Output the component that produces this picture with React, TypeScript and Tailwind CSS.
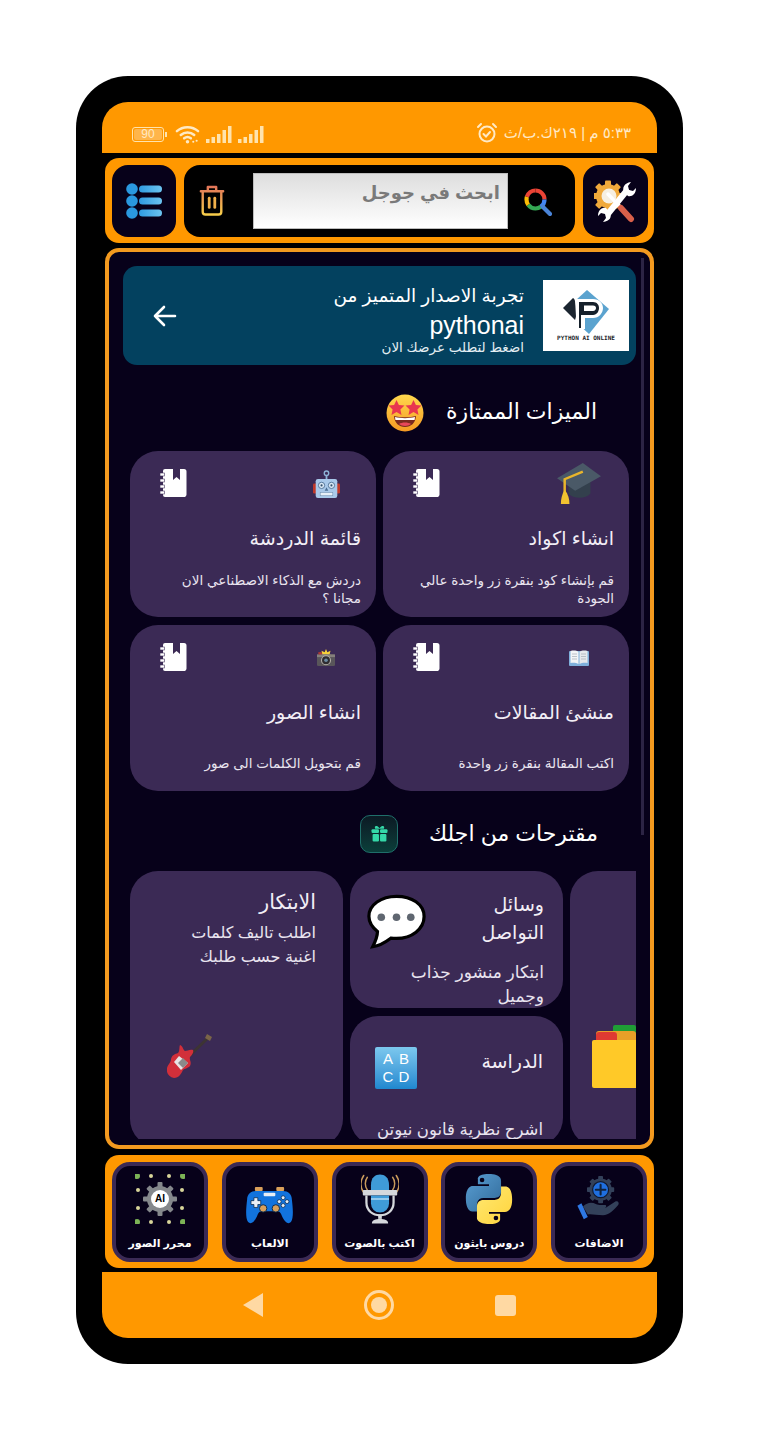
const arabic = "font-['Liberation_Sans','DejaVu_Sans',sans-serif]";

const Battery = () => (
  <div className="flex items-center">
    <div className="w-[32px] h-[15px] border border-[#ffe3ad] rounded-[3px] flex items-center justify-center p-[1px]">
      <div className="w-full h-full bg-[#ffb54a] rounded-[2px] text-[12px] leading-[11px] text-center text-[#ffe9c4] font-['Liberation_Sans',sans-serif]">90</div>
    </div>
    <div className="w-[2px] h-[5px] bg-[#ffe3ad] ml-[1px]" />
  </div>
);

const Wifi = () => (
  <svg width="25" height="20" viewBox="0 0 26 20" fill="none" stroke="#ffe9c4" strokeWidth="2.600" strokeLinecap="round">
    <path d="M2 7c6-5.500 16-5.500 22 0" />
    <path d="M6 11c4-3.500 10-3.500 14 0" />
    <path d="M9.500 14.500c2-1.500 5-1.500 7 0" />
    <circle cx="13" cy="18" r="1.800" fill="#ffe9c4" stroke="none" />
    <circle cx="19" cy="18" r="1.100" fill="#ffe9c4" stroke="none" />
    <circle cx="22.500" cy="17" r="1.100" fill="#ffe9c4" stroke="none" />
  </svg>
);

const Signal = () => (
  <svg width="26" height="17" viewBox="0 0 26 17" fill="#ffe3ad">
    <rect x="0" y="13" width="3.500" height="4" />
    <rect x="5.500" y="11" width="3.500" height="6" />
    <rect x="11" y="8" width="3.500" height="9" />
    <rect x="16.500" y="4" width="3.500" height="13" />
    <rect x="22" y="0" width="3.500" height="17" />
  </svg>
);

const Alarm = () => (
  <svg width="22" height="22" viewBox="0 0 22 22" fill="none" stroke="#ffe9c4" strokeWidth="2" strokeLinecap="round">
    <circle cx="11" cy="12" r="7.500" />
    <path d="M2 5l3-3M20 5l-3-3" />
    <path d="M7.500 12l2.500 2.500 4-4.500" />
  </svg>
);

const ListIcon = () => (
  <svg width="36" height="36" viewBox="0 0 36 36">
    <defs>
      <linearGradient id="bar" x1="0" x2="1" y1="0" y2="0">
        <stop offset="0" stopColor="#2f9be0" />
        <stop offset="1" stopColor="#6cc4f0" />
      </linearGradient>
    </defs>
    {[6, 18, 30].map((y) => (
      <g key={y}>
        <circle cx="6" cy={y} r="5.800" fill="#2a98df" />
        <rect x="13" y={y - 3.500} width="23" height="7" rx="3.500" fill="url(#bar)" />
      </g>
    ))}
  </svg>
);

const Trash = () => (
  <svg width="26" height="33" viewBox="0 0 28 34" fill="none" strokeWidth="2.600" strokeLinecap="round" strokeLinejoin="round">
    <defs>
      <linearGradient id="tr" gradientUnits="userSpaceOnUse" x1="0" x2="0" y1="0" y2="34">
        <stop offset="0" stopColor="#e0705a" />
        <stop offset="1" stopColor="#f8d24a" />
      </linearGradient>
    </defs>
    <path stroke="url(#tr)" d="M2 7h24M9.500 7V2.500h9V7M4 8v21a3 3 0 0 0 3 3h14a3 3 0 0 0 3-3V8" />
    <rect x="9.500" y="13" width="3" height="13" rx="1.500" fill="#f0b04a" />
    <rect x="15.500" y="13" width="3" height="13" rx="1.500" fill="#f0b04a" />
  </svg>
);

const GoogleSearch = () => (
  <svg width="28" height="28" viewBox="0 0 28 28" fill="none" strokeWidth="4.200">
    <g transform="rotate(-90 11.500 11.500)">
      <circle cx="11.500" cy="11.500" r="9" stroke="#ea4335" pathLength="100" strokeDasharray="25 75" strokeDashoffset="0" />
      <circle cx="11.500" cy="11.500" r="9" stroke="#4285f4" pathLength="100" strokeDasharray="15 85" strokeDashoffset="-25" />
      <circle cx="11.500" cy="11.500" r="9" stroke="#34a853" pathLength="100" strokeDasharray="25 75" strokeDashoffset="-40" />
      <circle cx="11.500" cy="11.500" r="9" stroke="#fbbc05" pathLength="100" strokeDasharray="15 85" strokeDashoffset="-65" />
      <circle cx="11.500" cy="11.500" r="9" stroke="#ea4335" pathLength="100" strokeDasharray="20 80" strokeDashoffset="-80" />
    </g>
    <path stroke="#4a84d8" strokeLinecap="round" d="M18.500 18.500l7.500 7.500" />
  </svg>
);

const Tools = () => (
  <svg width="44" height="44" viewBox="0 0 44 44">
    <g fill="#f0a93b">
      <circle cx="14" cy="17" r="12" />
      {[0, 45, 90, 135, 180, 225, 270, 315].map((a) => (
        <rect key={a} x="11" y="1.500" width="6" height="6" rx="1" transform={`rotate(${a} 14 17)`} />
      ))}
    </g>
    <circle cx="15" cy="17" r="7.500" fill="#f6efe2" />
    <path d="M13 36L34 10" stroke="#fff" strokeWidth="6" />
    <path d="M30 13c-2-4 0-9 7-10l-3 4 1 4 4 1 3-3c0 6-4 9-8 8z" fill="#fff" />
    <path d="M16 34c2 4 0 8-7 9l3-4-1-4-4-1-3 3c0-6 4-9 8-8z" fill="#fff" />
    <path d="M14 15l13 14" stroke="#fff" strokeWidth="3.500" strokeLinecap="round" />
    <path d="M27 29l10 11" stroke="#d8604a" strokeWidth="6" strokeLinecap="round" />
  </svg>
);

const Notebook = () => (
  <svg width="28" height="30" viewBox="0 0 28 30" className="shrink-0">
    <path d="M3 3a2 2 0 0 1 2-2h8v11l3.500-3 3.500 3V1h4a2.500 2.500 0 0 1 2.500 2.500v23A2.500 2.500 0 0 1 23.500 29H5a2 2 0 0 1-2-2z" fill="#fff" />
    {[5, 11, 17, 23].map((y) => (
      <rect key={y} x="0" y={y} width="4.500" height="3" fill="#fff" stroke="#3b2a55" strokeWidth=".6" />
    ))}
  </svg>
);

const GradCap = () => (
  <svg width="46" height="42" viewBox="0 0 46 44">
    <path d="M12 20v12c5 6 18 6 23 0V20z" fill="#33404d" />
    <path d="M0 16L27 0l19 14-27 15z" fill="#4a5967" />
    <path d="M27 9L8 17v15" fill="none" stroke="#e8b52c" strokeWidth="2.600" />
    <path d="M8 28c-3 5-4 10-4 15h9c0-5-1-10-5-15z" fill="#f2c230" />
  </svg>
);

const Robot = () => (
  <svg width="27" height="29" viewBox="0 0 30 32">
    <circle cx="15" cy="3.500" r="2.500" fill="none" stroke="#8fb4d8" strokeWidth="1.500" />
    <rect x="14" y="6" width="2" height="5" fill="#8fb4d8" />
    <rect x="0" y="15" width="4" height="11" rx="1.500" fill="#c0392b" />
    <rect x="26" y="15" width="4" height="11" rx="1.500" fill="#c0392b" />
    <rect x="3" y="10" width="24" height="21" rx="2.500" fill="#a9c9ea" />
    <circle cx="9.500" cy="17" r="3.500" fill="#dbe9f6" stroke="#4a6e94" />
    <circle cx="20.500" cy="17" r="3.500" fill="#dbe9f6" stroke="#4a6e94" />
    <circle cx="9.500" cy="17" r="1.200" fill="#36536f" />
    <circle cx="20.500" cy="17" r="1.200" fill="#36536f" />
    <path d="M15 19l-2 4h4z" fill="#4a6e94" />
    <rect x="8" y="25" width="14" height="3.500" fill="#e8f0f8" stroke="#6f8fae" strokeWidth=".6" />
  </svg>
);

const OpenBook = () => (
  <svg width="20" height="16" viewBox="0 0 20 16">
    <rect x="0" y="1" width="20" height="15" rx="1" fill="#7fb0dc" />
    <path d="M1.500 1c3-.8 6-.5 8 .8V14c-2-1.200-5-1.500-8-1z" fill="#f3f5f7" />
    <path d="M18.500 1c-3-.8-6-.5-8 .8V14c2-1.200 5-1.500 8-1z" fill="#e6e9ec" />
    <path d="M3 4h5M3 6.500h5M3 9h5M12 4h5M12 6.500h5M12 9h5" stroke="#a5adb5" strokeWidth=".7" />
  </svg>
);

const Camera = () => (
  <svg width="20" height="18" viewBox="0 0 22 20">
    <path d="M11 0l1.500 3.500L16 2l-1 4 4 1-3 3H6L3 7l4-1-1-4 3.500 1.500z" fill="#f8d23a" />
    <rect x="1" y="6" width="20" height="13" rx="1.500" fill="#59565a" />
    <rect x="1" y="6" width="20" height="3" fill="#85807c" />
    <circle cx="11" cy="12.500" r="5" fill="#2e2c30" stroke="#b5b0a8" strokeWidth="1.200" />
    <circle cx="11" cy="12.500" r="2" fill="#6b8aa0" />
    <rect x="2.500" y="3.500" width="4" height="2.500" fill="#b23a32" />
  </svg>
);

const Gift = () => (
  <div className="w-[38px] h-[38px] rounded-[10px] border border-[#1f6f6a] bg-gradient-to-b from-[#0b1a24] to-[#0a3f3a] flex items-center justify-center">
    <svg width="17" height="17" viewBox="0 0 16 16" fill="#34d8a8">
      <path d="M4 3.500C2.500 1 5.500-.5 8 3c2.500-3.500 5.500-2 4 .5z" />
      <rect x="0.500" y="4" width="7" height="3.500" rx="1" />
      <rect x="8.500" y="4" width="7" height="3.500" rx="1" />
      <rect x="1.500" y="8.500" width="6" height="7" rx="1" />
      <rect x="8.500" y="8.500" width="6" height="7" rx="1" />
    </svg>
  </div>
);

const StarEyes = () => (
  <svg width="38" height="38" viewBox="0 0 38 38" className="mt-[2px]">
    <defs>
      <linearGradient id="face" x1="0" x2="0" y1="0" y2="1">
        <stop offset="0" stopColor="#ffd84d" />
        <stop offset="1" stopColor="#f59a23" />
      </linearGradient>
    </defs>
    <circle cx="19" cy="19" r="18.500" fill="url(#face)" />
    <path d="M10.500 6l2.400 5 5.600.6-4.100 3.800 1.100 5.500-5-2.800-5 2.800 1.100-5.500-4.100-3.800 5.600-.6z" fill="#e8364f" />
    <path d="M27.500 6l2.400 5 5.600.6-4.100 3.800 1.100 5.500-5-2.800-5 2.800 1.100-5.500-4.100-3.800 5.600-.6z" fill="#e8364f" />
    <path d="M8 22c6 1.800 16 1.800 22 0-.5 7-5 11-11 11S8.500 29 8 22z" fill="#7a2a1e" />
    <path d="M9 23c6 1.500 14 1.500 20 0l-.4 3H9.400z" fill="#fff" />
    <path d="M13 30c3-2 9-2 12 0-3 2.500-9 2.500-12 0z" fill="#e8475a" />
  </svg>
);

const Bubble = () => (
  <svg width="59" height="56" viewBox="0 0 62 58">
    <path d="M31 2C15 2 2 11 2 23c0 7 4 12 9 16 0 5-3 12-5 16 7-1 15-6 19-9 2 .2 4 .3 6 .3 16 0 29-10 29-23S47 2 31 2z" fill="#fff" stroke="#000" strokeWidth="3.400" />
    {[15, 31, 46].map((x) => (
      <circle key={x} cx={x} cy="24" r="4" fill="#5f6670" />
    ))}
  </svg>
);

const Guitar = () => (
  <svg width="46" height="46" viewBox="0 0 46 46">
    <path d="M18 27L43 3" stroke="#3d3434" strokeWidth="3" />
    <path d="M40 1l5 3-2 4-5-3z" fill="#7a6448" />
    <path d="M13 12c3 1 3 5 5 6 2 0 5-2 8-1 1 2-1 5-3 7-1 3 2 5 0 9-3 3-5 2-7 4-2 4-4 8-9 8-5-1-8-5-7-10 1-4 4-5 4-9 1-4 4-5 7-6 2-2 1-6 2-8z" fill="#d22f3a" />
    <path d="M12 23l9 7-4 4-3 3-7-8z" fill="#e8e4e4" />
    <path d="M16 25l5 5-5 5-5-5z" fill="#8a8a8a" />
  </svg>
);

const Folder = () => (
  <svg width="44" height="63" viewBox="0 0 44 63" className="shrink-0">
    <rect x="21" y="0" width="23" height="10" rx="2" fill="#1f9d35" />
    <rect x="4" y="6" width="40" height="14" rx="3" fill="#e8a028" />
    <rect x="4" y="7" width="21" height="12" rx="3" fill="#df3a32" />
    <path d="M0 17a2 2 0 0 1 2-2h42v48H2a2 2 0 0 1-2-2z" fill="#ffc928" />
  </svg>
);

const Abcd = () => (
  <div className="w-[42px] h-[42px] rounded-[2px] bg-gradient-to-b from-[#7cc8ee] to-[#1e88cf] grid grid-cols-2 place-items-center px-[5px] py-[3px] text-white text-[15px] leading-[16px] font-['Liberation_Sans',sans-serif]">
    <span>A</span>
    <span>B</span>
    <span>C</span>
    <span>D</span>
  </div>
);

const PythonLogo = () => (
  <svg width="50" height="50" viewBox="0 0 50 54">
    <defs>
      <linearGradient id="pb" x1="0" x2="1" y1="0" y2="1">
        <stop offset="0" stopColor="#5a9fd4" />
        <stop offset="1" stopColor="#306998" />
      </linearGradient>
      <linearGradient id="py" x1="0" x2="1" y1="0" y2="1">
        <stop offset="0" stopColor="#ffe873" />
        <stop offset="1" stopColor="#ffd43b" />
      </linearGradient>
    </defs>
    <path d="M24.500 0C12 0 13 5.500 13 5.500V11h12v2H8S0 12 0 26.500 7 40.500 7 40.500h5v-7s-.3-7.500 7-7.500h12s7 .1 7-6.700V7S39 0 24.500 0zM17.500 4a2.500 2.500 0 1 1 0 5 2.500 2.500 0 0 1 0-5z" fill="url(#pb)" />
    <path d="M25.500 54C38 54 37 48.500 37 48.500V43H25v-2h17s8 1 8-13.500-7-14-7-14h-5v7s.3 7.500-7 7.500H19s-7-.1-7 6.700V47s-1 7 13.500 7zM32.500 50a2.500 2.500 0 1 1 0-5 2.500 2.500 0 0 1 0 5z" fill="url(#py)" />
  </svg>
);

const AddOn = () => (
  <svg width="48" height="47" viewBox="0 0 60 56">
    <g fill="#33415a">
      <circle cx="32" cy="17" r="14" />
      {[0, 45, 90, 135, 180, 225, 270, 315].map((a) => (
        <rect key={a} x="29" y="0" width="6" height="6" rx="1" transform={`rotate(${a} 32 17)`} />
      ))}
    </g>
    <circle cx="32" cy="17" r="10" fill="#1f6fe0" stroke="#111a30" strokeWidth="1.500" />
    <path d="M32 11v12M26 17h12" stroke="#10233f" strokeWidth="2.600" strokeLinecap="round" />
    <path d="M10 38c5-5 11-6 16-3 4 2 10 1 12 1 2 1 1 4-2 4h-6 8l12-8c3-2 6 1 4 4-4 5-12 13-19 13-9 0-14-2-19-1z" fill="#33415a" />
    <path d="M3 37l5-3 8 17-5 3z" fill="#2e78e4" />
  </svg>
);

const Mic = () => (
  <svg width="38" height="52" viewBox="0 0 42 54" fill="none">
    <path d="M7 3c-3 4-3 10 0 14M3 1c-4 6-4 13 0 19M35 3c3 4 3 10 0 14M39 1c4 6 4 13 0 19" stroke="#c89a5c" strokeWidth="1.600" strokeLinecap="round" />
    <path d="M11 12C11 3 16 0 21 0s10 3 10 12v5H11z" fill="#3f9bd8" />
    <rect x="2" y="17" width="38" height="6" rx="1" fill="#d5d8dc" />
    <path d="M11 23h20v9a10 10 0 0 1-20 0z" fill="#3f9bd8" />
    <path d="M11 27h20" stroke="#bfe0f5" strokeWidth="1.500" />
    <path d="M6 23v8c0 9 7 14 15 14s15-5 15-14v-8" stroke="#d5d8dc" strokeWidth="2.500" />
    <rect x="19" y="44" width="4" height="5" fill="#d5d8dc" />
    <path d="M12 54c0-4 4-5 9-5s9 1 9 5z" fill="#d5d8dc" />
  </svg>
);

const Gamepad = () => (
  <svg width="47" height="37" viewBox="0 0 48 38" className="mt-[14px]">
    <rect x="9" y="0" width="8" height="4" rx="1" fill="#d9a05a" />
    <rect x="31" y="0" width="8" height="4" rx="1" fill="#d9a05a" />
    <path d="M10 4h28c5 0 9 3 9 9 1 8 2 19-1 23-3 3-7 0-10-8-1-2-2-3-4-3H16c-2 0-3 1-4 3-3 8-7 11-10 8-3-4-2-15-1-23 0-6 4-9 9-9z" fill="#1273dd" />
    <rect x="18" y="6" width="12" height="3.500" rx="1" fill="#e8eef5" />
    <path d="M8 11h4v3h3v4h-3v3H8v-3H5v-4h3z" fill="#e8eef5" stroke="#0c2b4c" strokeWidth=".8" />
    <g fill="#e8eef5" stroke="#0c2b4c" strokeWidth=".8">
      <circle cx="38" cy="11" r="2" />
      <circle cx="38" cy="19" r="2" />
      <circle cx="34" cy="15" r="2" />
      <circle cx="42" cy="15" r="2" />
    </g>
    <circle cx="17.500" cy="22" r="3.800" fill="#d9a05a" stroke="#0c2b4c" />
    <circle cx="30.500" cy="22" r="3.800" fill="#d9a05a" stroke="#0c2b4c" />
  </svg>
);

const AiGear = () => (
  <div className="relative w-[50px] h-[50px]">
    <svg width="50" height="50" viewBox="0 0 50 50">
      {[
        [2, 2, 3, "#7cb356"],
        [16, 2, 2, "#d8d59a"],
        [34, 2, 2, "#d8d59a"],
        [48, 2, 3, "#7cb356"],
        [2, 48, 3, "#7cb356"],
        [16, 48, 2, "#d8d59a"],
        [34, 48, 2, "#d8d59a"],
        [48, 48, 3, "#7cb356"],
        [3, 16, 2, "#d8d59a"],
        [47, 16, 2, "#d8d59a"],
        [3, 34, 2, "#d8d59a"],
        [47, 34, 2, "#d8d59a"],
      ].map(([x, y, r, c], i) => (
        <circle key={i} cx={x as number} cy={y as number} r={r as number} fill={c as string} />
      ))}
      <g fill="#85888c">
        <circle cx="25" cy="25" r="13" />
        {[0, 45, 90, 135, 180, 225, 270, 315].map((a) => (
          <rect key={a} x="22.500" y="8" width="5" height="6" rx="1" transform={`rotate(${a} 25 25)`} />
        ))}
      </g>
      <circle cx="25" cy="25" r="9" fill="#fff" />
    </svg>
    <div className="absolute inset-0 flex items-center justify-center text-[10px] font-bold text-black font-['Liberation_Sans',sans-serif]">AI</div>
  </div>
);

const PythonAiLogo = () => (
  <div className="w-[86px] h-[71px] bg-white shrink-0 flex flex-col items-center justify-center">
    <svg width="46" height="44" viewBox="0 0 46 44">
      <path d="M24 0l22 19-20 25-13-12V10z" fill="#5ba3cf" />
      <path d="M0 18L10 8c4 2 4 18 2 22z" fill="#1b2530" />
      <path d="M12 9h18c6 0 10 4 10 9s-4 10-10 10h-8v11H13V27z" fill="#fff" />
      <path d="M16 12h14c4 0 6 3 6 6s-2 7-6 7H18v13h-2z" fill="#15202b" />
      <path d="M21 15.500h9c2 0 3 1 3 2.500s-1 3-3 3h-9z" fill="#fff" />
    </svg>
    <div className="text-[6px] leading-[7px] font-bold text-[#1a2228] font-['DejaVu_Sans_Mono',monospace]">PYTHON AI ONLINE</div>
  </div>
);

const features = [
  { title: "انشاء اكواد", desc: "قم بإنشاء كود  بنقرة زر واحدة عالي الجودة", icon: <GradCap /> },
  { title: "قائمة الدردشة", desc: "دردش مع الذكاء الاصطناعي الان مجانا ؟", icon: <Robot /> },
  { title: "منشئ المقالات", desc: "اكتب المقالة بنقرة زر واحدة", icon: <OpenBook /> },
  { title: "انشاء الصور", desc: "قم بتحويل الكلمات الى صور", icon: <Camera /> },
];

const FeatureCard = ({ title, desc, icon }: { title: string; desc: string; icon: React.ReactNode }) => (
  <div className="h-[166px] rounded-[28px] bg-[#3b2a55] pt-[17px] pl-[30px] pr-[15px] flex flex-col">
    <div className="flex justify-between items-start h-[49px] pr-[12px]">
      <Notebook />
      <div className="w-[46px] h-[32px] flex items-center justify-center">{icon}</div>
    </div>
    <div dir="rtl" className={`${arabic} text-[19px] leading-[26px] text-[#f2eef6] mt-[9px]`}>{title}</div>
    <div dir="rtl" className={`${arabic} h-[38px] flex flex-col justify-center text-[13.500px] leading-[18px] text-[#e9e4ef] mt-[19px] -ml-[4px]`}>
      <span>{desc}</span>
    </div>
  </div>
);

const tabs = [
  { label: "محرر الصور", icon: <AiGear /> },
  { label: "الالعاب", icon: <Gamepad /> },
  { label: "اكتب بالصوت", icon: <Mic /> },
  { label: "دروس بايثون", icon: <PythonLogo /> },
  { label: "الاضافات", icon: <AddOn /> },
];

export default function App() {
  return (
    <div className="w-[759px] h-[1440px] bg-white pt-[76px] flex justify-center">
      <div className="w-[607px] h-[1288px] bg-black rounded-[52px] p-[26px]">
        <div className="h-full flex flex-col gap-[5px]">
          {/* status bar */}
          <div className="h-[51px] bg-[#ff9800] rounded-t-[26px] flex items-end justify-between pl-[30px] pr-[26px] pb-[9px] shrink-0">
            <div className="flex items-center gap-[6px]">
              <Battery />
              <div className="ml-[2px]">
                <Wifi />
              </div>
              <Signal />
              <Signal />
            </div>
            <div className="flex items-center gap-[6px]">
              <Alarm />
              <div dir="rtl" className={`${arabic} text-[15px] leading-[20px] text-[#ffe9c4]`}>٥:٣٣ م | ٢١٩ك.ب/ث</div>
            </div>
          </div>

          {/* top bar */}
          <div className="h-[85px] mx-[3px] bg-[#ff9800] rounded-[14px] flex items-center gap-[8px] pl-[7px] pr-[6px] shrink-0">
            <div className="w-[64px] h-[72px] rounded-[16px] bg-[#07011a] flex items-center justify-center shrink-0">
              <ListIcon />
            </div>
            <div className="flex-1 h-[72px] rounded-[16px] bg-black flex items-center pl-[15px]">
              <Trash />
              <div dir="rtl" className={`${arabic} ml-[28px] w-[255px] h-[56px] border border-[#bdbdbd] bg-gradient-to-b from-[#dedede] to-white pr-[7px] pt-[6px] text-[18px] leading-[26px] font-bold text-[#7a7a7a]`}>ابحث في جوجل</div>
              <div className="ml-[16px] mt-[2px]">
                <GoogleSearch />
              </div>
            </div>
            <div className="w-[65px] h-[72px] rounded-[16px] bg-[#07011a] flex items-center justify-center shrink-0">
              <Tools />
            </div>
          </div>

          {/* main panel */}
          <div className="relative h-[901px] mx-[3px] border-4 border-[#f39a1f] rounded-[14px] bg-[#07011a] pt-[14px] pb-[6px] pl-[14px] pr-[14px] flex flex-col shrink-0 overflow-hidden">
            <div className="absolute right-[6px] top-[6px] w-[3px] h-[577px] bg-[#2c2444]" />

            <div className="h-[99px] rounded-[14px] bg-[#03415f] flex items-center justify-between pl-[30px] pr-[7px] shrink-0">
              <svg width="24" height="24" viewBox="0 0 24 24" fill="none" stroke="#fff" strokeWidth="2.600" strokeLinecap="round" strokeLinejoin="round">
                <path d="M2 12h20M11 3l-9 9 9 9" />
              </svg>
              <div className="flex items-center gap-[19px]">
                <div dir="rtl" className={`${arabic} text-right text-white pt-[7px]`}>
                  <div className="text-[18.500px] leading-[26px]">تجربة الاصدار المتميز من</div>
                  <div className="text-[25px] leading-[32px] text-right" dir="ltr">pythonai</div>
                  <div className="text-[13.500px] leading-[14px] text-[#e4eef3]">اضغط لتطلب عرضك الان</div>
                </div>
                <PythonAiLogo />
              </div>
            </div>

            <div className="h-[86px] flex items-center justify-end gap-[22px] pr-[39px] pt-[7px] shrink-0">
              <StarEyes />
              <div dir="rtl" className={`${arabic} text-[22px] leading-[30px] text-white`}>الميزات الممتازة</div>
            </div>

            <div className="grid grid-cols-2 gap-x-[7px] gap-y-[8px] px-[7px] shrink-0" dir="rtl">
              {features.map((f) => (
                <div dir="ltr" key={f.title}>
                  <FeatureCard title={f.title} desc={f.desc} icon={f.icon} />
                </div>
              ))}
            </div>

            <div className="h-[80px] flex items-center justify-end gap-[31px] pr-[38px] pt-[5px] shrink-0">
              <Gift />
              <div dir="rtl" className={`${arabic} text-[22px] leading-[30px] text-white`}>مقترحات من اجلك</div>
            </div>

            <div className="flex-1 min-h-0 overflow-hidden flex gap-[7px] pl-[7px]">
              <div className="w-[213px] h-[276px] shrink-0 rounded-[28px] bg-[#3b2a55] pt-[16px] pr-[27px] flex flex-col">
                <div dir="rtl" className={`${arabic} text-[20.500px] leading-[30px] text-[#f2eef6]`}>الابتكار</div>
                <div dir="rtl" className={`${arabic} text-[16px] leading-[24px] text-[#e9e4ef] mt-[4px] pl-[50px]`}>اطلب تاليف كلمات اغنية حسب طلبك</div>
                <div className="ml-[37px] mt-[64px]">
                  <Guitar />
                </div>
              </div>
              <div className="w-[213px] shrink-0 flex flex-col gap-[8px]">
                <div className="h-[137px] shrink-0 rounded-[28px] bg-[#3b2a55] pl-[17px] pr-[19px] pt-[20px] overflow-hidden">
                  <div className="flex items-start justify-between h-[70px]">
                    <div className="mt-[3px]">
                      <Bubble />
                    </div>
                    <div dir="rtl" className={`${arabic} w-[100px] text-[19px] leading-[28px] text-[#f2eef6]`}>وسائل التواصل</div>
                  </div>
                  <div dir="rtl" className={`${arabic} text-[17px] leading-[24px] text-[#e9e4ef] pl-[30px]`}>ابتكار منشور جذاب وجميل</div>
                </div>
                <div className="h-[130px] shrink-0 rounded-[28px] bg-[#3b2a55] pl-[25px] pr-[20px] pt-[31px]">
                  <div className="flex items-start justify-between">
                    <Abcd />
                    <div dir="rtl" className={`${arabic} text-[19px] leading-[30px] text-[#f2eef6]`}>الدراسة</div>
                  </div>
                  <div dir="rtl" className={`${arabic} text-[16.500px] leading-[25px] text-[#e9e4ef] mt-[28px] whitespace-nowrap`}>اشرح نظرية قانون نيوتن</div>
                </div>
              </div>
              <div className="w-[213px] h-[276px] shrink-0 rounded-[28px] bg-[#3b2a55] pl-[22px] pt-[154px]">
                <Folder />
              </div>
            </div>
          </div>

          {/* bottom shortcuts */}
          <div className="h-[113px] mx-[3px] mt-[1px] bg-[#ff9800] rounded-[14px] flex items-center justify-between px-[7px] shrink-0">
            {tabs.map((t) => (
              <div key={t.label} className="w-[96px] h-[100px] rounded-[18px] border-4 border-[#3b2a55] bg-[#07011a] flex flex-col items-center pt-[2px]">
                <div className="h-[62px] flex items-center justify-center">{t.icon}</div>
                <div dir="rtl" className={`${arabic} mt-[5px] text-[11px] leading-[16px] font-bold text-white whitespace-nowrap`}>{t.label}</div>
              </div>
            ))}
          </div>

          {/* android nav */}
          <div className="flex-1 bg-[#ff9800] rounded-b-[26px] -mt-[1px] flex items-center justify-between pl-[141px] pr-[141px]">
            <div className="w-0 h-0 border-y-[12px] border-y-transparent border-r-[20px] border-r-[#ffd9a3]" />
            <div className="w-[30px] h-[30px] rounded-full border-[3px] border-[#ffd9a3] flex items-center justify-center">
              <div className="w-[16px] h-[16px] rounded-full bg-[#ffd9a3]" />
            </div>
            <div className="w-[21px] h-[21px] rounded-[3px] bg-[#ffd9a3]" />
          </div>
        </div>
      </div>
    </div>
  );
}
